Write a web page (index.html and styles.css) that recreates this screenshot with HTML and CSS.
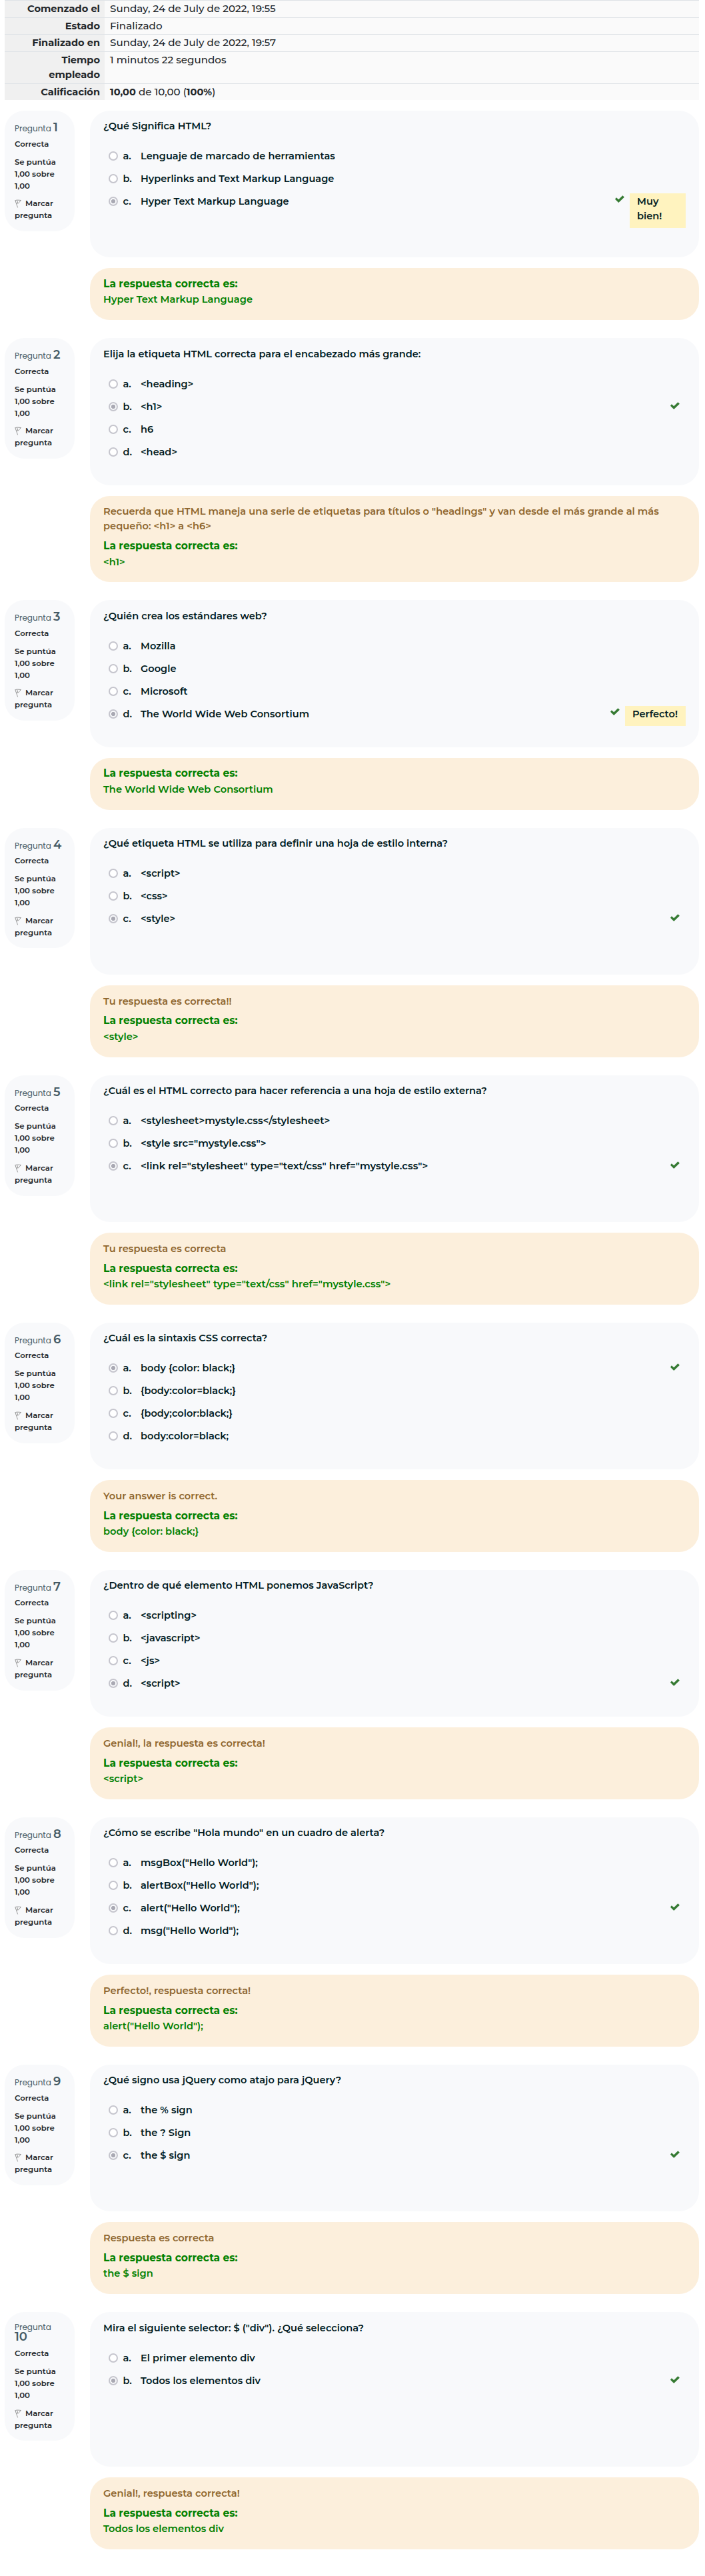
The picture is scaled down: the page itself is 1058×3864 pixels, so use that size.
FILE: index.html
```
<!DOCTYPE html>
<html lang="es">
<head>
<meta charset="utf-8">
<title>Revisión del cuestionario</title>
<link rel="stylesheet" href="styles.css">
</head>
<body>
<svg class="defs" aria-hidden="true">
  <symbol id="check" viewBox="0 0 14 11"><path d="M1.9 3.2 5.3 6.3 11.4.2 13.9 2.7 5.3 11 0 5.7Z"/></symbol>
  <symbol id="flag" viewBox="0 0 10 13"><path d="M.7 1.2 4.6 12.4M1.2 1.7C3 .7 6 1.2 9.4 1.5 7.6 3 6.9 5 5.2 6.2 4.6 5.5 3.6 6 2.7 6M3.5 1.4 4.8 5.6" fill="none" stroke="#8a8a8a" stroke-width=".9"/></symbol>
</svg>
<main class="page">
  <dl class="summary">
    <div class="row"><dt>Comenzado el</dt><dd>Sunday, 24 de July de 2022, 19:55</dd></div>
    <div class="row"><dt>Estado</dt><dd>Finalizado</dd></div>
    <div class="row"><dt>Finalizado en</dt><dd>Sunday, 24 de July de 2022, 19:57</dd></div>
    <div class="row tall"><dt>Tiempo empleado</dt><dd>1 minutos 22 segundos</dd></div>
    <div class="row"><dt>Calificación</dt><dd><b>10,00</b> de 10,00 (<b>100%</b>)</dd></div>
  </dl>

  <section class="question">
    <aside class="info"><h3>Pregunta <b>1</b></h3><p>Correcta</p><p>Se puntúa 1,00 sobre 1,00</p><p><svg class="flag"><use href="#flag"/></svg>Marcar pregunta</p></aside>
    <div class="content">
      <div class="card">
        <p class="text">¿Qué Significa HTML?</p>
        <div class="option"><i class="radio"></i><span class="key">a.</span><span>Lenguaje de marcado de herramientas</span></div>
        <div class="option"><i class="radio"></i><span class="key">b.</span><span>Hyperlinks and Text Markup Language</span></div>
        <div class="option"><i class="radio on"></i><span class="key">c.</span><span>Hyper Text Markup Language</span><svg class="check"><use href="#check"/></svg><span class="note narrow">Muy bien!</span></div>
      </div>
      <div class="feedback"><p class="right">La respuesta correcta es:</p><p class="answer">Hyper Text Markup Language</p></div>
    </div>
  </section>

  <section class="question">
    <aside class="info"><h3>Pregunta <b>2</b></h3><p>Correcta</p><p>Se puntúa 1,00 sobre 1,00</p><p><svg class="flag"><use href="#flag"/></svg>Marcar pregunta</p></aside>
    <div class="content">
      <div class="card">
        <p class="text">Elija la etiqueta HTML correcta para el encabezado más grande:</p>
        <div class="option"><i class="radio"></i><span class="key">a.</span><span>&lt;heading&gt;</span></div>
        <div class="option"><i class="radio on"></i><span class="key">b.</span><span>&lt;h1&gt;</span><svg class="check"><use href="#check"/></svg></div>
        <div class="option"><i class="radio"></i><span class="key">c.</span><span>h6</span></div>
        <div class="option"><i class="radio"></i><span class="key">d.</span><span>&lt;head&gt;</span></div>
      </div>
      <div class="feedback"><p class="general">Recuerda que HTML maneja una serie de etiquetas para títulos o "headings" y van desde el más grande al más pequeño: &lt;h1&gt; a &lt;h6&gt;</p><p class="right">La respuesta correcta es:</p><p class="answer">&lt;h1&gt;</p></div>
    </div>
  </section>

  <section class="question">
    <aside class="info"><h3>Pregunta <b>3</b></h3><p>Correcta</p><p>Se puntúa 1,00 sobre 1,00</p><p><svg class="flag"><use href="#flag"/></svg>Marcar pregunta</p></aside>
    <div class="content">
      <div class="card">
        <p class="text">¿Quién crea los estándares web?</p>
        <div class="option"><i class="radio"></i><span class="key">a.</span><span>Mozilla</span></div>
        <div class="option"><i class="radio"></i><span class="key">b.</span><span>Google</span></div>
        <div class="option"><i class="radio"></i><span class="key">c.</span><span>Microsoft</span></div>
        <div class="option"><i class="radio on"></i><span class="key">d.</span><span>The World Wide Web Consortium</span><svg class="check"><use href="#check"/></svg><span class="note">Perfecto!</span></div>
      </div>
      <div class="feedback"><p class="right">La respuesta correcta es:</p><p class="answer">The World Wide Web Consortium</p></div>
    </div>
  </section>

  <section class="question">
    <aside class="info"><h3>Pregunta <b>4</b></h3><p>Correcta</p><p>Se puntúa 1,00 sobre 1,00</p><p><svg class="flag"><use href="#flag"/></svg>Marcar pregunta</p></aside>
    <div class="content">
      <div class="card">
        <p class="text">¿Qué etiqueta HTML se utiliza para definir una hoja de estilo interna?</p>
        <div class="option"><i class="radio"></i><span class="key">a.</span><span>&lt;script&gt;</span></div>
        <div class="option"><i class="radio"></i><span class="key">b.</span><span>&lt;css&gt;</span></div>
        <div class="option"><i class="radio on"></i><span class="key">c.</span><span>&lt;style&gt;</span><svg class="check"><use href="#check"/></svg></div>
      </div>
      <div class="feedback"><p class="general">Tu respuesta es correcta!!</p><p class="right">La respuesta correcta es:</p><p class="answer">&lt;style&gt;</p></div>
    </div>
  </section>

  <section class="question">
    <aside class="info"><h3>Pregunta <b>5</b></h3><p>Correcta</p><p>Se puntúa 1,00 sobre 1,00</p><p><svg class="flag"><use href="#flag"/></svg>Marcar pregunta</p></aside>
    <div class="content">
      <div class="card">
        <p class="text">¿Cuál es el HTML correcto para hacer referencia a una hoja de estilo externa?</p>
        <div class="option"><i class="radio"></i><span class="key">a.</span><span class="code">&lt;stylesheet&gt;mystyle.css&lt;/stylesheet&gt;</span></div>
        <div class="option"><i class="radio"></i><span class="key">b.</span><span class="code">&lt;style src="mystyle.css"&gt;</span></div>
        <div class="option"><i class="radio on"></i><span class="key">c.</span><span class="code">&lt;link rel="stylesheet" type="text/css" href="mystyle.css"&gt;</span><svg class="check"><use href="#check"/></svg></div>
      </div>
      <div class="feedback"><p class="general">Tu respuesta es correcta</p><p class="right">La respuesta correcta es:</p><p class="answer code">&lt;link rel="stylesheet" type="text/css" href="mystyle.css"&gt;</p></div>
    </div>
  </section>

  <section class="question">
    <aside class="info"><h3>Pregunta <b>6</b></h3><p>Correcta</p><p>Se puntúa 1,00 sobre 1,00</p><p><svg class="flag"><use href="#flag"/></svg>Marcar pregunta</p></aside>
    <div class="content">
      <div class="card">
        <p class="text">¿Cuál es la sintaxis CSS correcta?</p>
        <div class="option"><i class="radio on"></i><span class="key">a.</span><span>body {color: black;}</span><svg class="check"><use href="#check"/></svg></div>
        <div class="option"><i class="radio"></i><span class="key">b.</span><span>{body:color=black;}</span></div>
        <div class="option"><i class="radio"></i><span class="key">c.</span><span>{body;color:black;}</span></div>
        <div class="option"><i class="radio"></i><span class="key">d.</span><span>body:color=black;</span></div>
      </div>
      <div class="feedback"><p class="general">Your answer is correct.</p><p class="right">La respuesta correcta es:</p><p class="answer">body {color: black;}</p></div>
    </div>
  </section>

  <section class="question">
    <aside class="info"><h3>Pregunta <b>7</b></h3><p>Correcta</p><p>Se puntúa 1,00 sobre 1,00</p><p><svg class="flag"><use href="#flag"/></svg>Marcar pregunta</p></aside>
    <div class="content">
      <div class="card">
        <p class="text">¿Dentro de qué elemento HTML ponemos JavaScript?</p>
        <div class="option"><i class="radio"></i><span class="key">a.</span><span>&lt;scripting&gt;</span></div>
        <div class="option"><i class="radio"></i><span class="key">b.</span><span>&lt;javascript&gt;</span></div>
        <div class="option"><i class="radio"></i><span class="key">c.</span><span>&lt;js&gt;</span></div>
        <div class="option"><i class="radio on"></i><span class="key">d.</span><span>&lt;script&gt;</span><svg class="check"><use href="#check"/></svg></div>
      </div>
      <div class="feedback"><p class="general">Genial!, la respuesta es correcta!</p><p class="right">La respuesta correcta es:</p><p class="answer">&lt;script&gt;</p></div>
    </div>
  </section>

  <section class="question">
    <aside class="info"><h3>Pregunta <b>8</b></h3><p>Correcta</p><p>Se puntúa 1,00 sobre 1,00</p><p><svg class="flag"><use href="#flag"/></svg>Marcar pregunta</p></aside>
    <div class="content">
      <div class="card">
        <p class="text">¿Cómo se escribe "Hola mundo" en un cuadro de alerta?</p>
        <div class="option"><i class="radio"></i><span class="key">a.</span><span>msgBox("Hello World");</span></div>
        <div class="option"><i class="radio"></i><span class="key">b.</span><span>alertBox("Hello World");</span></div>
        <div class="option"><i class="radio on"></i><span class="key">c.</span><span>alert("Hello World");</span><svg class="check"><use href="#check"/></svg></div>
        <div class="option"><i class="radio"></i><span class="key">d.</span><span>msg("Hello World");</span></div>
      </div>
      <div class="feedback"><p class="general">Perfecto!, respuesta correcta!</p><p class="right">La respuesta correcta es:</p><p class="answer">alert("Hello World");</p></div>
    </div>
  </section>

  <section class="question">
    <aside class="info"><h3>Pregunta <b>9</b></h3><p>Correcta</p><p>Se puntúa 1,00 sobre 1,00</p><p><svg class="flag"><use href="#flag"/></svg>Marcar pregunta</p></aside>
    <div class="content">
      <div class="card">
        <p class="text">¿Qué signo usa jQuery como atajo para jQuery?</p>
        <div class="option"><i class="radio"></i><span class="key">a.</span><span>the % sign</span></div>
        <div class="option"><i class="radio"></i><span class="key">b.</span><span>the ? Sign</span></div>
        <div class="option"><i class="radio on"></i><span class="key">c.</span><span>the $ sign</span><svg class="check"><use href="#check"/></svg></div>
      </div>
      <div class="feedback"><p class="general">Respuesta es correcta</p><p class="right">La respuesta correcta es:</p><p class="answer">the $ sign</p></div>
    </div>
  </section>

  <section class="question">
    <aside class="info two-line"><h3>Pregunta <b>10</b></h3><p>Correcta</p><p>Se puntúa 1,00 sobre 1,00</p><p><svg class="flag"><use href="#flag"/></svg>Marcar pregunta</p></aside>
    <div class="content">
      <div class="card taller">
        <p class="text">Mira el siguiente selector: $ ("div"). ¿Qué selecciona?</p>
        <div class="option"><i class="radio"></i><span class="key">a.</span><span>El primer elemento div</span></div>
        <div class="option"><i class="radio on"></i><span class="key">b.</span><span>Todos los elementos div</span><svg class="check"><use href="#check"/></svg></div>
      </div>
      <div class="feedback"><p class="general">Genial!, respuesta correcta!</p><p class="right">La respuesta correcta es:</p><p class="answer">Todos los elementos div</p></div>
    </div>
  </section>
</main>
</body>
</html>
```
FILE: styles.css
```
* { box-sizing: border-box; }
body {
  margin: 0;
  background: #fff;
  color: #212529;
  font: 500 15px/22px Montserrat, Inter, "Open Sans", sans-serif;
}
p, h3, dl, dd { margin: 0; }
.defs { display: none; }
.page { min-height: 3864px; padding: 0 9px 0 7px; }

.summary { margin-bottom: 16px; }
.row {
  display: grid;
  grid-template-columns: 150px 1fr;
  min-height: 25.5px;
  border-top: 1px solid #dee2e6;
  background: #fafafa;
}
.row.tall { min-height: 48px; }
.row dt {
  padding: 1px 7px 0 30px;
  background: #f0f0f0;
  font-weight: 700;
  font-size: 14.6px;
  text-align: right;
}
.row dd { padding: 1px 8px 0; font-size: 15.15px; }
.row b { font-weight: 700; font-size: 14.6px; }

.question {
  display: grid;
  grid-template-columns: 105px 1fr;
  gap: 23px;
  align-items: start;
  margin-bottom: 27px;
}
.info {
  height: 180.8px;
  padding: 15px 15px 0;
  border-radius: 30px;
  background: #f8f9fb;
  font-size: 11.7px;
  font-weight: 600;
  line-height: 18px;
}
.info h3 {
  height: 25.5px;
  font: 400 12px/20px Poppins, Questrial, Inter, sans-serif;
  color: #455a64;
}
.info h3 b { font: 600 18px/20px Montserrat, Inter, sans-serif; }
.info p { margin-bottom: 8.6px; }
.info p:first-of-type { margin-bottom: 9px; }
.info.two-line { height: 193px; }
.info.two-line h3 { height: 38px; line-height: 15px; }
.info.two-line h3 b { line-height: 15px; }
.flag { width: 10px; height: 13px; margin: 0 6px 0 0; vertical-align: -3px; }

.card {
  height: 220.3px;
  margin-bottom: 16px;
  padding: 12.4px 20px 0;
  border-radius: 30px;
  background: #f8f9fb;
  color: #001a1e;
  font-size: 14.6px;
  font-weight: 600;
}
.card.taller { height: 232.3px; }
.text { margin-bottom: 17px; }
.option { display: flex; align-items: flex-start; height: 34px; padding: 6px 0 0 8px; }
.radio {
  flex: none;
  width: 14px;
  height: 14px;
  margin: 4px 7.5px 0 0;
  border: 2px solid #c5c5cd;
  border-radius: 50%;
  background: #fff;
}
.radio.on { background: radial-gradient(circle, #a9a9b3 2.8px, #f8f9fb 3.5px); }
.key { flex: none; width: 26.5px; }
.check { flex: none; width: 14px; height: 11px; margin: 3px 9px 0 auto; fill: #357a32; }
.note {
  height: 30px;
  margin-top: -1px;
  padding: 1px 11px 0;
  background: #fff3bf;
}
.note:not(.narrow) { width: 91px; }
.note.narrow { width: 84px; height: 52px; padding-right: 25px; }
.check:has(+ .note) { margin-top: 2px; margin-right: 8px; }
.check:last-child { margin-top: 4px; }
.card .code { font-size: 14.95px; }

.feedback {
  min-height: 78px;
  padding: 12.7px 20px 17.8px;
  border-radius: 30px;
  background: #fcefdc;
  color: #8e662e;
  font-size: 14.7px;
  font-weight: 600;
}
.general { margin-bottom: 7.8px; }
.right { color: #008000; font-weight: 700; font-size: 15.5px; }
.answer { margin-top: 1.5px; margin-bottom: 2px; color: #008000; }
.feedback .code { font-size: 14.95px; }
```
